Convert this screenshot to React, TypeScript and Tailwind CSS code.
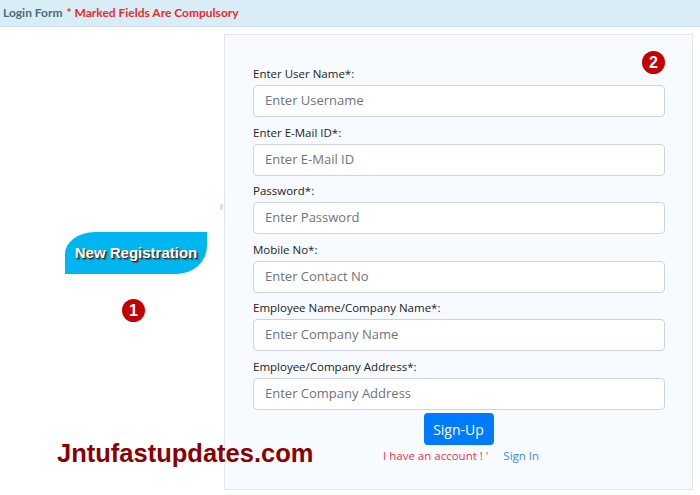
const fields = [
  { label: "Enter User Name*:", placeholder: "Enter Username" },
  { label: "Enter E-Mail ID*:", placeholder: "Enter E-Mail ID" },
  { label: "Password*:", placeholder: "Enter Password" },
  { label: "Mobile No*:", placeholder: "Enter Contact No" },
  { label: "Employee Name/Company Name*:", placeholder: "Enter Company Name" },
  { label: "Employee/Company Address*:", placeholder: "Enter Company Address" },
];

function Badge({ n }: { n: number }) {
  return (
    <span className="flex h-[23px] w-[23px] items-center justify-center rounded-full bg-[#c40000] text-[16px] font-bold leading-none text-white [font-family:'Liberation_Sans',Arial,sans-serif]">
      {n}
    </span>
  );
}

export default function App() {
  return (
    <div className="h-[495px] w-[700px] overflow-hidden bg-white [font-family:'Open_Sans',sans-serif]">
      <div className="flex h-[27px] items-center border-b border-[#cfe3ee] bg-[#d9edf7] pl-[3px] text-[12px] font-bold [font-family:Lato,sans-serif]">
        <span className="text-[#4b6b7c]">Login Form</span>
        <span className="ml-[4px] text-[#ee2a2a]">* Marked Fields Are Compulsory</span>
      </div>

      <div className="flex">
        <div className="relative w-[224px]">
          <div className="ml-[65px] mt-[205px] flex h-[42px] w-[142px] items-center justify-center rounded-tl-[30px_22px] rounded-br-[30px_28px] bg-[#00b6f1]">
            <span className="text-[15px] font-bold text-white [text-shadow:1px_1px_0_#333,2px_2px_1px_#555] [font-family:'Liberation_Sans',sans-serif]">
              New Registration
            </span>
          </div>
          <div className="ml-[122px] mt-[25px]">
            <Badge n={1} />
          </div>
          <div className="absolute left-[220px] top-[177px] h-[6px] w-[3px] bg-[#cfe6f4]" />
          <div className="mt-[112px] pl-[57px] text-[25.5px] font-bold text-[#8b0000] [font-family:'Liberation_Sans',Arial,sans-serif]">
            <span className="relative z-10">Jntufastupdates.com</span>
          </div>
        </div>

        <div className="relative mt-[7px] h-[456px] w-[469px] border border-[#e1e6ea] bg-[#f7fbff] px-[28px] pt-[30px]">
          <div className="absolute right-[27px] top-[16px]">
            <Badge n={2} />
          </div>
          {fields.map((f) => (
            <div key={f.label} className="mb-[6.5px]">
              <div className="mb-[3px] h-[17px] text-[11.5px] leading-[17px] text-[#222]">{f.label}</div>
              <div className="flex h-[32px] w-[412px] items-center rounded-[4px] border border-[#ced4da] bg-white px-[11px] text-[13px] text-[#6f7479]">
                {f.placeholder}
              </div>
            </div>
          ))}
          <div className="-mt-[3px] flex justify-center">
            <button className="h-[32px] w-[70px] rounded-[4px] bg-[#007bff] text-[14px] text-white">Sign-Up</button>
          </div>
          <div className="mt-[2px] flex items-center pl-[130px] text-[11.5px]">
            <span className="text-[#f2344a]">I have an account ! '</span>
            <span className="ml-[15px] text-[#3a8cf0]">Sign In</span>
          </div>
        </div>
      </div>
    </div>
  );
}
